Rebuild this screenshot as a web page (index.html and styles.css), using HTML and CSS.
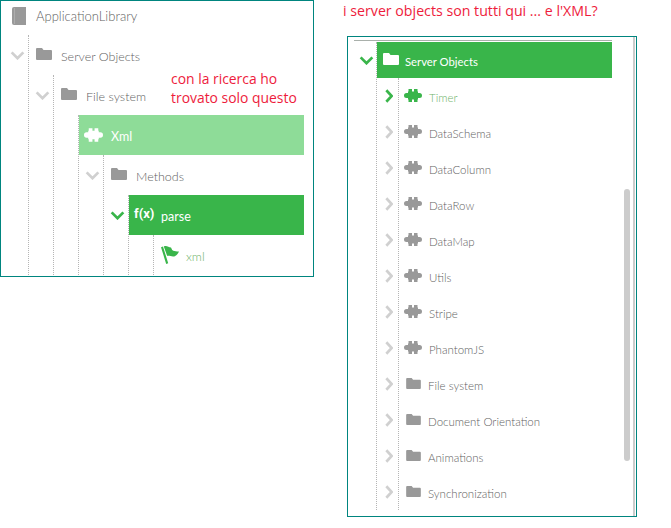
FILE: index.html
```html
<!DOCTYPE html>
<html lang="it">
<head>
<meta charset="utf-8">
<title>Server Objects</title>
<link rel="stylesheet" href="styles.css">
</head>
<body>
<svg class="defs" width="0" height="0" aria-hidden="true">
  <symbol id="folder" viewBox="0 0 16 12"><path d="M0 1q0-1 1-1h5l1.500 2H15q1 0 1 1v8q0 1-1 1H1q-1 0-1-1z"/></symbol>
  <symbol id="puzzle" viewBox="0 0 18 13"><path d="M4.500 0h3.500v2.500h2V0h3.500v2.500h.5V4h1.500q2.500 0 2.500 2.500T15.500 9H14v1.500h-.5V13H10v-2.500H8V13H4.500v-2.500H4V9H2.500Q0 9 0 6.500T2.500 4H4V2.500h.5z"/></symbol>
  <symbol id="book" viewBox="0 0 14 18"><path d="M2 0h12v18H2a2 2 0 0 1-2-2V2a2 2 0 0 1 2-2z"/><path d="M2.500 1v16" stroke="#bbb" stroke-width="1" opacity=".6"/></symbol>
  <symbol id="flag" viewBox="0 0 18 18"><path d="M0 1.200 2 .4 7.200 17.200l-2 .8z"/><path d="M2.800 .6C5.500-.8 7.500 1.300 10 1.600l1.200 2.500c1.800 1.300 4.200 1.700 6.800 1.300-1.300 2.600-2.800 4.600-5 5.100-2.400.4-4.300-.9-6.800-.6z"/></symbol>
  <symbol id="down" viewBox="0 0 16 10"><path d="M1.500 1.500 8 8l6.500-6.500" fill="none" stroke="currentColor" stroke-width="3"/></symbol>
  <symbol id="right" viewBox="0 0 9 15"><path d="M1.500 1 7.500 7.500l-6 6.500" fill="none" stroke="currentColor" stroke-width="3"/></symbol>
</svg>

<main class="page">
  <section class="panel panel-search">
    <div class="root-row">
      <svg class="ico-book"><use href="#book"/></svg>
      <span class="label">ApplicationLibrary</span>
    </div>
    <ul class="tree">
      <li>
        <div class="row">
          <svg class="chev"><use href="#down"/></svg>
          <div class="cell"><svg class="ico-folder"><use href="#folder"/></svg><span class="label">Server Objects</span></div>
        </div>
        <ul class="tree">
          <li>
            <div class="row">
              <svg class="chev"><use href="#down"/></svg>
              <div class="cell"><svg class="ico-folder"><use href="#folder"/></svg><span class="label">File system</span></div>
            </div>
            <ul class="tree">
              <li>
                <div class="row">
                  <span class="chev-space"></span>
                  <div class="cell cell-light"><svg class="ico-puzzle shift"><use href="#puzzle"/></svg><span class="label">Xml</span></div>
                </div>
                <ul class="tree">
                  <li>
                    <div class="row">
                      <svg class="chev"><use href="#down"/></svg>
                      <div class="cell"><svg class="ico-folder"><use href="#folder"/></svg><span class="label">Methods</span></div>
                    </div>
                    <ul class="tree">
                      <li>
                        <div class="row">
                          <svg class="chev chev-on"><use href="#down"/></svg>
                          <div class="cell cell-on"><span class="fx">f(x)</span><span class="label">parse</span></div>
                        </div>
                        <ul class="tree">
                          <li>
                            <div class="row">
                              <span class="chev-space"></span>
                              <div class="cell"><svg class="ico-flag"><use href="#flag"/></svg><span class="label label-green">xml</span></div>
                            </div>
                          </li>
                        </ul>
                      </li>
                    </ul>
                  </li>
                </ul>
              </li>
            </ul>
          </li>
        </ul>
      </li>
    </ul>
    <p class="note note-over">con la ricerca ho<br>trovato solo questo</p>
  </section>

  <div class="side">
    <p class="note">i server objects son tutti qui ... e l'XML?</p>
    <section class="panel panel-list">
      <div class="rule"></div>
      <ul class="tree">
        <li>
          <div class="row">
            <svg class="chev chev-on"><use href="#down"/></svg>
            <div class="cell cell-on"><svg class="ico-folder"><use href="#folder"/></svg><span class="label">Server Objects</span></div>
          </div>
          <ul class="tree">
            <li><div class="row"><svg class="chev-r chev-on"><use href="#right"/></svg><div class="cell"><svg class="ico-puzzle green"><use href="#puzzle"/></svg><span class="label label-green">Timer</span></div></div></li>
            <li><div class="row"><svg class="chev-r"><use href="#right"/></svg><div class="cell"><svg class="ico-puzzle"><use href="#puzzle"/></svg><span class="label">DataSchema</span></div></div></li>
            <li><div class="row"><svg class="chev-r"><use href="#right"/></svg><div class="cell"><svg class="ico-puzzle"><use href="#puzzle"/></svg><span class="label">DataColumn</span></div></div></li>
            <li><div class="row"><svg class="chev-r"><use href="#right"/></svg><div class="cell"><svg class="ico-puzzle"><use href="#puzzle"/></svg><span class="label">DataRow</span></div></div></li>
            <li><div class="row"><svg class="chev-r"><use href="#right"/></svg><div class="cell"><svg class="ico-puzzle"><use href="#puzzle"/></svg><span class="label">DataMap</span></div></div></li>
            <li><div class="row"><svg class="chev-r"><use href="#right"/></svg><div class="cell"><svg class="ico-puzzle"><use href="#puzzle"/></svg><span class="label">Utils</span></div></div></li>
            <li><div class="row"><svg class="chev-r"><use href="#right"/></svg><div class="cell"><svg class="ico-puzzle"><use href="#puzzle"/></svg><span class="label">Stripe</span></div></div></li>
            <li><div class="row"><svg class="chev-r"><use href="#right"/></svg><div class="cell"><svg class="ico-puzzle"><use href="#puzzle"/></svg><span class="label">PhantomJS</span></div></div></li>
            <li><div class="row"><svg class="chev-r"><use href="#right"/></svg><div class="cell"><svg class="ico-folder"><use href="#folder"/></svg><span class="label">File system</span></div></div></li>
            <li><div class="row"><svg class="chev-r"><use href="#right"/></svg><div class="cell"><svg class="ico-folder"><use href="#folder"/></svg><span class="label">Document Orientation</span></div></div></li>
            <li><div class="row"><svg class="chev-r"><use href="#right"/></svg><div class="cell"><svg class="ico-folder"><use href="#folder"/></svg><span class="label">Animations</span></div></div></li>
            <li><div class="row"><svg class="chev-r"><use href="#right"/></svg><div class="cell"><svg class="ico-folder"><use href="#folder"/></svg><span class="label">Synchronization</span></div></div></li>
          </ul>
        </li>
      </ul>
      <div class="thumb"></div>
    </section>
  </div>
</main>
</body>
</html>
```
FILE: styles.css
```css
html, body {
  margin: 0;
  padding: 0;
  background: #fff;
}

.defs {
  position: absolute;
}

.page {
  display: flex;
  align-items: flex-start;
  gap: 29px;
  width: 671px;
  height: 528px;
  font-family: Lato, "Liberation Sans", sans-serif;
  overflow: hidden;
}

.panel {
  position: relative;
  box-sizing: border-box;
  border: 1px solid #00857f;
  overflow: hidden;
  background: #fff;
}

.panel-search {
  --row: 40px;
  --step: 25px;
  --pad: 7px;
  --icon: 25px;
  width: 314px;
  height: 277px;
  padding-right: 9px;
}

.panel-list {
  --row: 36px;
  --step: 22px;
  --pad: 6px;
  --icon: 22px;
  width: 290px;
  height: 481px;
  margin: 16px 0 0 4px;
  padding-top: 3px;
  padding-right: 24px;
}

.panel-list::after {
  content: "";
  position: absolute;
  top: 0;
  bottom: 0;
  right: 1px;
  width: 2px;
  background: #ccc;
}

.rule {
  height: 1px;
  margin: 0 0 1px 6px;
  background: #a9b0ab;
}

.root-row {
  display: flex;
  align-items: center;
  height: 30px;
  padding: 0 0 4px 11px;
}

.ico-book {
  flex: none;
  width: 14px;
  height: 18px;
  margin: -1px 10px 0 0;
  fill: #999;
}

.tree {
  list-style: none;
  margin: 0;
  padding: 0;
}

.panel-search > .tree {
  margin-left: 27px;
  border-left: 1px dotted #b5b5b5;
}

.panel-list > .tree {
  margin-left: 28px;
  border-left: 1px dotted #b5b5b5;
}

.tree .tree {
  margin-left: calc(var(--step) - 1px);
  border-left: 1px dotted #b5b5b5;
}

.row {
  display: flex;
  align-items: center;
  height: var(--row);
  margin-left: calc(var(--step) * -1);
}

.chev, .chev-space, .chev-r {
  flex: none;
  display: block;
  color: #d0d0d0;
}

.chev {
  width: 15px;
  height: 9px;
  margin: 0 4px 0 6px;
}

.panel-list .chev {
  width: 15px;
  height: 9px;
  margin: 0 3px 0 4px;
}

.chev-r {
  width: 8px;
  height: 14px;
  margin: -1px 6px 0 8px;
}

.chev-space {
  width: var(--step);
}

.chev-on {
  color: #39b54a;
}

.cell {
  flex: 1;
  min-width: 0;
  display: flex;
  align-items: center;
  align-self: stretch;
  padding-left: var(--pad);
  color: #5f5f5f;
}

.cell-on {
  background: #39b54a;
  color: #fff;
  fill: #fff;
}

.cell-light {
  background: #8edc98;
  color: #fff;
  fill: #fff;
}

.ico-folder {
  flex: none;
  width: 16px;
  height: 12px;
  margin: -2px 0 0 0;
  margin-right: calc(var(--icon) - 16px);
  fill: #999;
}

.panel-list .ico-folder {
  width: 15px;
  height: 11px;
  margin: -2px 7px 0 1px;
}

.panel-list .cell-on .ico-folder {
  width: 16px;
  height: 12px;
  margin: -2px 6px 0 0;
}

.cell-on .ico-folder {
  fill: #fff;
}

.panel-search .cell-light .ico-puzzle {
  fill: #fff;
}

.ico-puzzle {
  flex: none;
  width: 18px;
  height: 13px;
  margin: -1px 7px 0 -1px;
  fill: #999;
}

.ico-puzzle.shift {
  width: 19px;
  height: 14px;
  margin: -1px 8px 0 -2px;
}

.ico-puzzle.green {
  fill: #39b54a;
}

.ico-flag {
  flex: none;
  width: 18px;
  height: 18px;
  margin: 0 7px 0 0;
  fill: #39b54a;
}

.fx {
  flex: none;
  width: 27px;
  margin: -3px 0 0 -2px;
  font: bold 13px/1 Roboto, "Liberation Sans", sans-serif;
  color: #fff;
}

.label {
  padding-top: 2px;
  font-size: 12.500px;
  font-weight: 300;
  white-space: nowrap;
  color: #5f5f5f;
}

.root-row .label {
  padding-top: 0;
  font-size: 13px;
}

.panel-list .label {
  font-size: 11.500px;
}

.cell-on .label, .cell-light .label {
  color: #fff;
  font-weight: 400;
}

.panel-list .cell-on .label {
  font-size: 11.300px;
}

.panel .label-green {
  color: #6fb36a;
}

.note {
  margin: 0;
  font: 13.900px/19px "Open Sans", "Liberation Sans", sans-serif;
  color: #ee1c3c;
  white-space: nowrap;
}

.side > .note {
  padding-top: 1px;
  font-size: 14.200px;
}

.note-over {
  position: absolute;
  top: 68px;
  left: 170px;
}

.thumb {
  position: absolute;
  top: 152px;
  right: 6px;
  width: 6px;
  height: 272px;
  border-radius: 3px;
  background: #ccc;
}
```
